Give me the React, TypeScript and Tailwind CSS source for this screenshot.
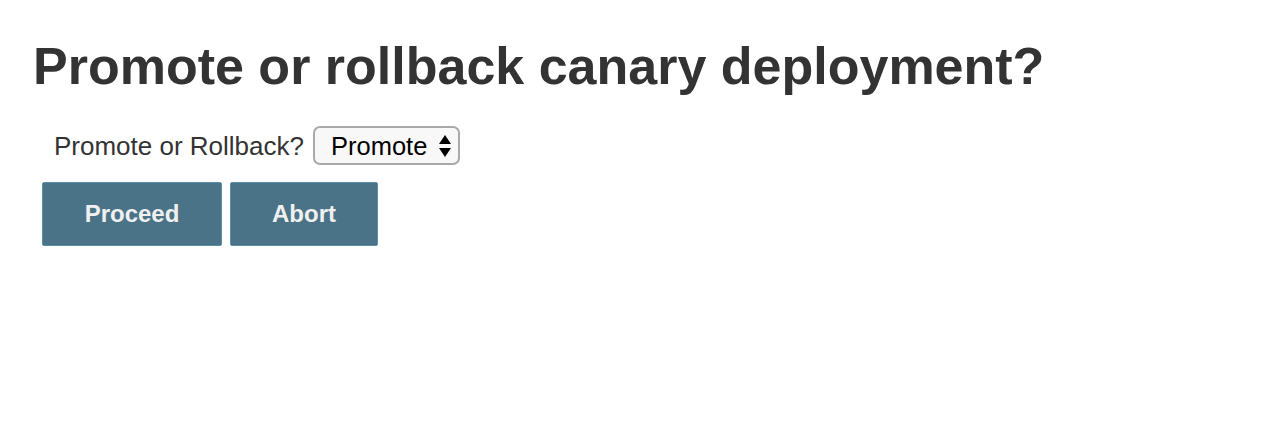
import { useState } from "react";

export default function App() {
  const [choice, setChoice] = useState("Promote");

  return (
    <div className="min-h-screen bg-white px-[33px] pt-[35px] font-['Liberation_Sans',Arial,sans-serif] text-[#333333]">
      <h1 className="text-[52px] font-bold leading-[62px]">
        Promote or rollback canary deployment?
      </h1>

      <div className="mt-[29px] flex items-center gap-[9px] pl-[21px]">
        <label htmlFor="choice" className="text-[26px] leading-[30px]">
          Promote or Rollback?
        </label>
        <div className="relative">
          <select
            id="choice"
            value={choice}
            onChange={(e) => setChoice(e.target.value)}
            className="h-[39px] w-[147px] appearance-none rounded-[7px] border-2 border-[#a9a9a9] bg-[#f8f8f8] pl-[16px] pr-[28px] text-[25.5px] leading-[30px] text-black"
          >
            <option>Promote</option>
            <option>Rollback</option>
          </select>
          <svg
            className="pointer-events-none absolute right-[9px] top-[9px]"
            width="12"
            height="22"
            viewBox="0 0 12 22"
          >
            <path d="M6 0 L12 9 L0 9 Z" fill="#000" />
            <path d="M0 13 L12 13 L6 22 Z" fill="#000" />
          </svg>
        </div>
      </div>

      <div className="mt-[17px] flex gap-[8px] pl-[9px]">
        <button className="h-[64px] w-[180px] rounded-[2px] border border-[#5d8da5] bg-[#4b7387] text-[24px] font-bold text-[#f0f0f0]">
          Proceed
        </button>
        <button className="h-[64px] w-[148px] rounded-[2px] border border-[#5d8da5] bg-[#4b7387] text-[24px] font-bold text-[#f0f0f0]">
          Abort
        </button>
      </div>
    </div>
  );
}
